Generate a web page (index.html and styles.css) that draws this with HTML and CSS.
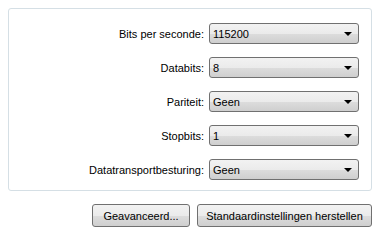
FILE: index.html
```html
<!DOCTYPE html>
<html lang="nl">
<head>
  <meta charset="UTF-8" />
  <title>Poortinstellingen</title>
  <link rel="stylesheet" href="styles.css">
</head>
<body>
  <div class="group">
    <div class="form-grid">
      <label>Bits per seconde:</label>
      <div class="combo"><span>115200</span><i class="arrow"></i></div>

      <label>Databits:</label>
      <div class="combo"><span>8</span><i class="arrow"></i></div>

      <label>Pariteit:</label>
      <div class="combo"><span>Geen</span><i class="arrow"></i></div>

      <label>Stopbits:</label>
      <div class="combo"><span>1</span><i class="arrow"></i></div>

      <label>Datatransportbesturing:</label>
      <div class="combo"><span>Geen</span><i class="arrow"></i></div>
    </div>
  </div>

  <!-- knoppen onderaan -->
  <div class="buttons">
    <button class="btn btn-advanced">Geavanceerd...</button>
    <button class="btn btn-reset">Standaardinstellingen herstellen</button>
  </div>
</body>
</html>
```

FILE: styles.css
```css
body {
  margin: 0;
  background: #fff;
  font-family: "Liberation Sans", Arial, sans-serif;
  font-size: 11px;
  color: #000;
}

.group {
  margin: 8px 5px 0 8px;
  height: 181px;
  border: 1px solid #d5dfe5;
  border-radius: 3px;
  box-sizing: content-box;
}

.form-grid {
  display: grid;
  grid-template-columns: 1fr 150px;
  grid-auto-rows: 21px;
  row-gap: 13px;
  column-gap: 5px;
  padding: 14px 12px 0 0;
  align-items: center;
}

.form-grid label {
  text-align: right;
}

.combo {
  height: 21px;
  box-sizing: border-box;
  border: 1px solid #707070;
  border-radius: 3px;
  background: linear-gradient(#f2f2f2 0%, #ebebeb 50%, #dddddd 51%, #cfcfcf 100%);
  display: flex;
  align-items: center;
  justify-content: space-between;
  padding: 0 6px 0 3px;
}

.arrow {
  width: 0;
  height: 0;
  border-left: 4px solid transparent;
  border-right: 4px solid transparent;
  border-top: 4px solid #000;
  margin-top: 1px;
}

.buttons {
  display: flex;
  justify-content: flex-end;
  gap: 7px;
  margin: 13px 5px 0 0;
}

.btn {
  height: 23px;
  box-sizing: border-box;
  border: 1px solid #707070;
  border-radius: 3px;
  background: linear-gradient(#f2f2f2 0%, #ebebeb 50%, #dddddd 51%, #cfcfcf 100%);
  font-family: "Liberation Sans", Arial, sans-serif;
  font-size: 11px;
  color: #000;
  padding: 0;
}

.btn-advanced {
  width: 98px;
}

.btn-reset {
  width: 175px;
}
```
